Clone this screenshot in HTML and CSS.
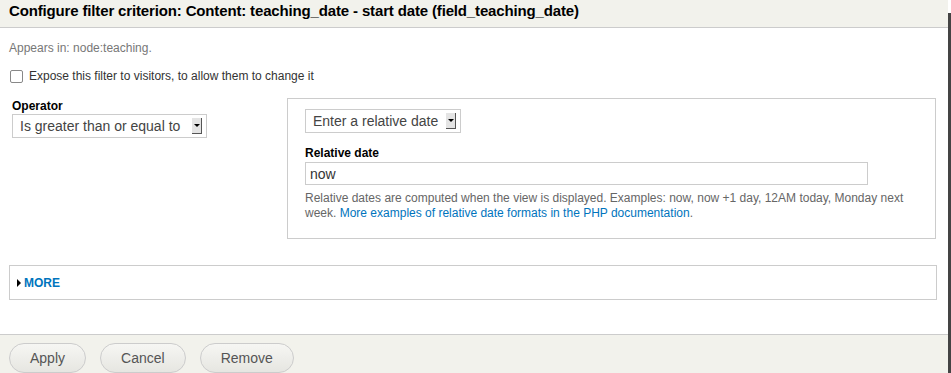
FILE: index.html
```html
<!DOCTYPE html>
<html lang="en">

<head>
    <meta charset="UTF-8">
    <title>Configure filter criterion</title>
    <link rel="stylesheet" href="styles.css">
</head>

<body>
    <div class="dialog">
        <div class="dialog-title">Configure filter criterion: Content: teaching_date - start date (field_teaching_date)</div>
        <div class="dialog-body">
            <div class="appears">Appears in: node:teaching.</div>
            <label class="expose"><span class="check"></span> Expose this filter to visitors, to allow them to change it</label>

            <div class="filter-row">
                <div class="operator">
                    <div class="label">Operator</div>
                    <div class="select select-op">Is greater than or equal to <span class="arrow"></span></div>
                </div>
                <div class="value-box">
                    <div class="select select-type">Enter a relative date <span class="arrow"></span></div>
                    <div class="label">Relative date</div>
                    <div class="text-input">now</div>
                    <p class="description">Relative dates are computed when the view is displayed. Examples: now, now +1 day, 12AM today, Monday next week. <a href="#">More examples of relative date formats in the PHP documentation</a>.</p>
                </div>
            </div>

            <div class="more"><span class="tri"></span><a href="#">MORE</a></div>
        </div>
        <div class="dialog-buttons">
            <button type="button" class="btn-apply">Apply</button>
            <button type="button" class="btn-cancel">Cancel</button>
            <button type="button" class="btn-remove">Remove</button>
        </div>
    </div>
    <div class="edge"></div>
</body>

</html>
```

FILE: styles.css
```css
* {
    margin: 0;
    padding: 0;
    box-sizing: border-box;
    font-family: "Liberation Sans", Arial, sans-serif;
}

body {
    width: 951px;
    height: 373px;
    overflow: hidden;
    background: white;
    position: relative;
}

.dialog {
    width: 948px;
}

.dialog-title {
    height: 28px;
    background: #f2f2ec;
    border-bottom: 1px solid #ccc;
    padding: 2px 9px 0;
    font-size: 15px;
    font-weight: bold;
    color: #000;
    letter-spacing: -0.15px;
}

.dialog-body {
    height: 306px;
    padding: 12px 12px 0 9px;
}

.appears {
    font-size: 12px;
    color: #777;
    line-height: 14px;
    margin-top: 1px;
}

.expose {
    display: flex;
    align-items: center;
    gap: 6px;
    margin-top: 14px;
    font-size: 12px;
    color: #333;
    padding-left: 1px;
}

.check {
    width: 13px;
    height: 13px;
    border: 1px solid #888;
    border-radius: 2px;
    background: white;
}

.filter-row {
    display: flex;
    margin-top: 15px;
}

.operator {
    width: 278px;
    padding: 1px 0 0 3px;
}

.label {
    font-size: 12px;
    font-weight: bold;
    color: #000;
    line-height: 14px;
}

.select {
    display: flex;
    align-items: center;
    justify-content: space-between;
    height: 24px;
    border: 1px solid #ccc;
    padding: 0 4px 0 7px;
    font-size: 14px;
    color: #444;
    white-space: nowrap;
}

.select-op {
    width: 195px;
    margin-top: 1px;
}

.select-type {
    width: 156px;
    margin-bottom: 13px;
}

.arrow {
    width: 10px;
    height: 16px;
    background: #e4e4e4;
    border-right: 1px solid #555;
    border-bottom: 1px solid #555;
    position: relative;
}

.arrow::after {
    content: "";
    position: absolute;
    left: 2px;
    top: 6px;
    border-left: 3px solid transparent;
    border-right: 3px solid transparent;
    border-top: 3px solid #000;
}

.value-box {
    width: 649px;
    height: 141px;
    border: 1px solid #ccc;
    padding: 10px 17px 0 17px;
}

.text-input {
    width: 563px;
    height: 23px;
    border: 1px solid #ccc;
    margin-top: 2px;
    padding: 3px 4px 0;
    font-size: 14px;
    color: #333;
}

.description {
    margin-top: 6px;
    font-size: 12px;
    line-height: 15px;
    color: #666;
    width: 615px;
}

.description a,
.more a {
    color: #0074bd;
    text-decoration: none;
}

.more {
    display: flex;
    align-items: center;
    gap: 3px;
    width: 928px;
    height: 35px;
    margin-top: 26px;
    border: 1px solid #ccc;
    padding-left: 7px;
    font-size: 12px;
    font-weight: bold;
}

.tri {
    border-top: 4px solid transparent;
    border-bottom: 4px solid transparent;
    border-left: 4px solid #000;
}

.dialog-buttons {
    display: flex;
    gap: 14px;
    height: 40px;
    background: #f2f2ec;
    border-top: 1px solid #ccc;
    padding: 8px 9px 0;
}

.dialog-buttons button {
    height: 30px;
    padding: 0 20px;
    border: 1px solid #ccc;
    border-radius: 15px;
    background: linear-gradient(#f6f6f3, #e6e6e1);
    font-size: 14px;
    color: #555;
    font-family: "Liberation Sans", Arial, sans-serif;
}

.dialog-buttons .btn-remove {
    padding: 0 20px;
}

.edge {
    position: absolute;
    right: 0;
    top: 13px;
    width: 3px;
    height: 360px;
    background: #444;
}
```
